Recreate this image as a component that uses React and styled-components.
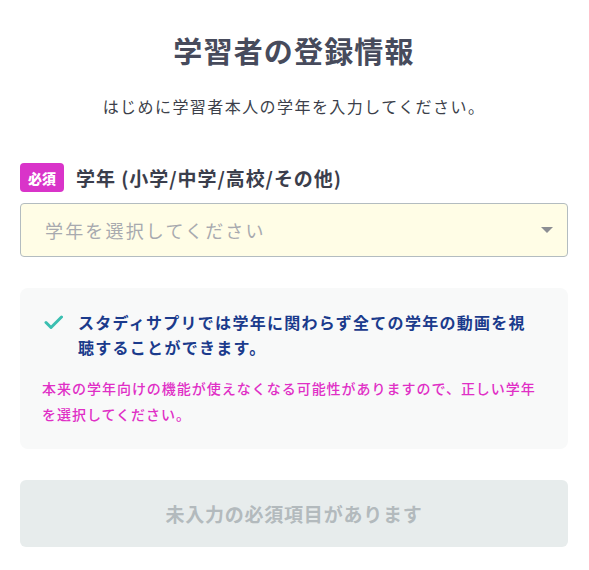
import React from "react";
import styled, { createGlobalStyle } from "styled-components";

const GlobalStyle = createGlobalStyle`
  body {
    margin: 0;
    background: #fff;
    font-family: "Noto Sans CJK JP", "Noto Sans", sans-serif;
  }
`;

const Page = styled.div`
  padding: 30px 21px 23px 20px;
  letter-spacing: 0.06em;
`;

const Title = styled.h1`
  margin: 0;
  text-align: center;
  font-size: 29px;
  line-height: 40px;
  font-weight: 700;
  color: #474b5c;
  letter-spacing: 0.04em;
`;

const Lead = styled.p`
  margin: 24px 0 0;
  text-align: center;
  font-size: 16px;
  line-height: 24px;
  color: #3c3f4a;
  letter-spacing: 0.09em;
`;

const Field = styled.div`
  margin-top: 45px;
`;

const LabelRow = styled.div`
  display: flex;
  align-items: center;
  gap: 12px;
`;

const Badge = styled.span`
  display: inline-flex;
  align-items: center;
  justify-content: center;
  width: 44px;
  height: 29px;
  border-radius: 4px;
  background: #d934c9;
  color: #fff;
  font-size: 14px;
  font-weight: 900;
  letter-spacing: 0;
`;

const Label = styled.span`
  font-size: 19px;
  line-height: 28px;
  font-weight: 700;
  color: #3b3e4c;
  letter-spacing: 0.05em;
`;

const Select = styled.div`
  margin-top: 11px;
  height: 54px;
  box-sizing: border-box;
  display: flex;
  align-items: center;
  justify-content: space-between;
  padding: 0 14px 0 24px;
  border: 1px solid #b3bcc0;
  border-radius: 4px;
  background: #fffde6;
`;

const Placeholder = styled.span`
  font-size: 18px;
  color: #a8aaaf;
  letter-spacing: 0.12em;
`;

const Caret = styled.span`
  width: 0;
  height: 0;
  border-left: 6px solid transparent;
  border-right: 6px solid transparent;
  border-top: 6px solid #8c8e93;
`;

const Notice = styled.div`
  margin-top: 31px;
  padding: 22px 30px 22px 22px;
  border-radius: 8px;
  background: #f8f9f9;
`;

const CheckRow = styled.div`
  display: flex;
  align-items: flex-start;
  gap: 15px;
`;

const CheckIcon = styled.svg`
  flex: none;
  margin: 5px 0 0 2px;
`;

const Point = styled.p`
  margin: 0;
  font-size: 16px;
  line-height: 25px;
  font-weight: 700;
  color: #1b3b8c;
  letter-spacing: 0.08em;
`;

const Caution = styled.p`
  margin: 15px -8px 0 0;
  font-size: 14px;
  line-height: 26px;
  font-weight: 500;
  color: #e02fc6;
  letter-spacing: 0.07em;
`;

const Submit = styled.button`
  display: block;
  width: 100%;
  height: 67px;
  margin-top: 31px;
  border: 0;
  border-radius: 6px;
  background: #e7ecec;
  color: #b3babd;
  font-family: inherit;
  font-size: 19px;
  font-weight: 700;
  letter-spacing: 0.04em;
`;

export default function App() {
  return (
    <>
      <GlobalStyle />
      <Page>
        <Title>学習者の登録情報</Title>
        <Lead>はじめに学習者本人の学年を入力してください。</Lead>

        <Field>
          <LabelRow>
            <Badge>必須</Badge>
            <Label>学年 (小学/中学/高校/その他)</Label>
          </LabelRow>
          <Select>
            <Placeholder>学年を選択してください</Placeholder>
            <Caret />
          </Select>
        </Field>

        <Notice>
          <CheckRow>
            <CheckIcon width="19" height="15" viewBox="0 0 19 15">
              <path
                d="M2 7.5 L7 12.5 L17.5 2"
                fill="none"
                stroke="#3bbfb1"
                strokeWidth="3"
                strokeLinecap="round"
                strokeLinejoin="round"
              />
            </CheckIcon>
            <Point>
              スタディサプリでは学年に関わらず全ての学年の動画を視聴することができます。
            </Point>
          </CheckRow>
          <Caution>
            本来の学年向けの機能が使えなくなる可能性がありますので、正しい学年を選択してください。
          </Caution>
        </Notice>

        <Submit disabled>未入力の必須項目があります</Submit>
      </Page>
    </>
  );
}
